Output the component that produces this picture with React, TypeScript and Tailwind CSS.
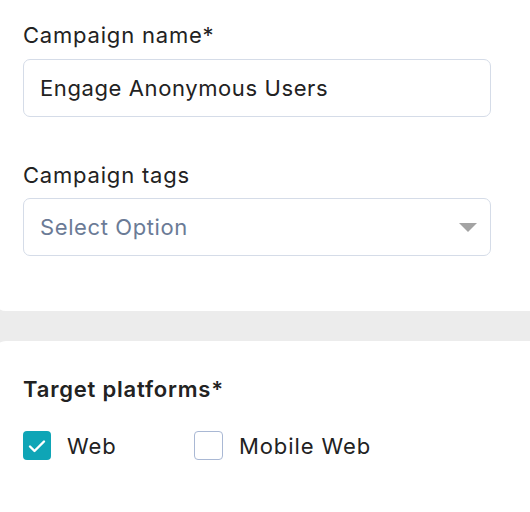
import React from "react";

const font = { fontFamily: "Inter, 'Liberation Sans', sans-serif" };

function Checkbox({ checked, label }: { checked: boolean; label: string }) {
  return (
    <label className="flex items-center gap-[16px]">
      {checked ? (
        <span className="flex h-[29px] w-[28px] items-center justify-center rounded-[4px] bg-[#0fa5b6]">
          <svg width="18" height="14" viewBox="0 0 18 14" fill="none">
            <path d="M2 7.5l4.5 4.5L16 2.5" stroke="#fff" strokeWidth="2.4" strokeLinecap="round" strokeLinejoin="round" />
          </svg>
        </span>
      ) : (
        <span className="h-[29px] w-[29px] rounded-[4px] border border-[#a9b8d4] bg-white" />
      )}
      <span className="text-[22px] leading-[28px] tracking-[0.9px] text-[#222]">{label}</span>
    </label>
  );
}

export default function App() {
  return (
    <div className="min-h-[512px] w-[530px] overflow-hidden bg-[#ececec]" style={font}>
      {/* 캠페인 기본 정보 */}
      <div className="-ml-[6px] w-[560px] rounded-b-[12px] bg-white pb-[55px] pl-[29px] pt-[21px]">
        <div className="mb-[10px] text-[22px] leading-[28px] tracking-[0.8px] text-[#222]">Campaign name*</div>
        <div className="flex h-[58px] w-[468px] items-center rounded-[7px] border border-[#d5dce8] px-[16px] text-[22px] tracking-[0.6px] text-[#222]">
          Engage Anonymous Users
        </div>

        <div className="mb-[9px] mt-[44px] text-[22px] leading-[28px] tracking-[0.8px] text-[#222]">Campaign tags</div>
        <div className="flex h-[58px] w-[468px] items-center justify-between rounded-[7px] border border-[#d5dce8] pl-[16px] pr-[13px] text-[22px] tracking-[0.6px] text-[#6b7b96]">
          <span>Select Option</span>
          <svg width="18" height="9" viewBox="0 0 18 9">
            <path d="M0 0h18L9 9z" fill="#a3a3a3" />
          </svg>
        </div>
      </div>

      {/* 대상 플랫폼 */}
      <div className="-ml-[6px] mt-[30px] w-[560px] rounded-t-[12px] bg-white pb-[60px] pl-[29px] pt-[34px]">
        <div className="mb-[28px] text-[22px] font-semibold leading-[28px] tracking-[0.8px] text-[#222]">Target platforms*</div>
        <div className="flex items-center">
          <div className="w-[171px]">
            <Checkbox checked label="Web" />
          </div>
          <Checkbox checked={false} label="Mobile Web" />
        </div>
      </div>
    </div>
  );
}
